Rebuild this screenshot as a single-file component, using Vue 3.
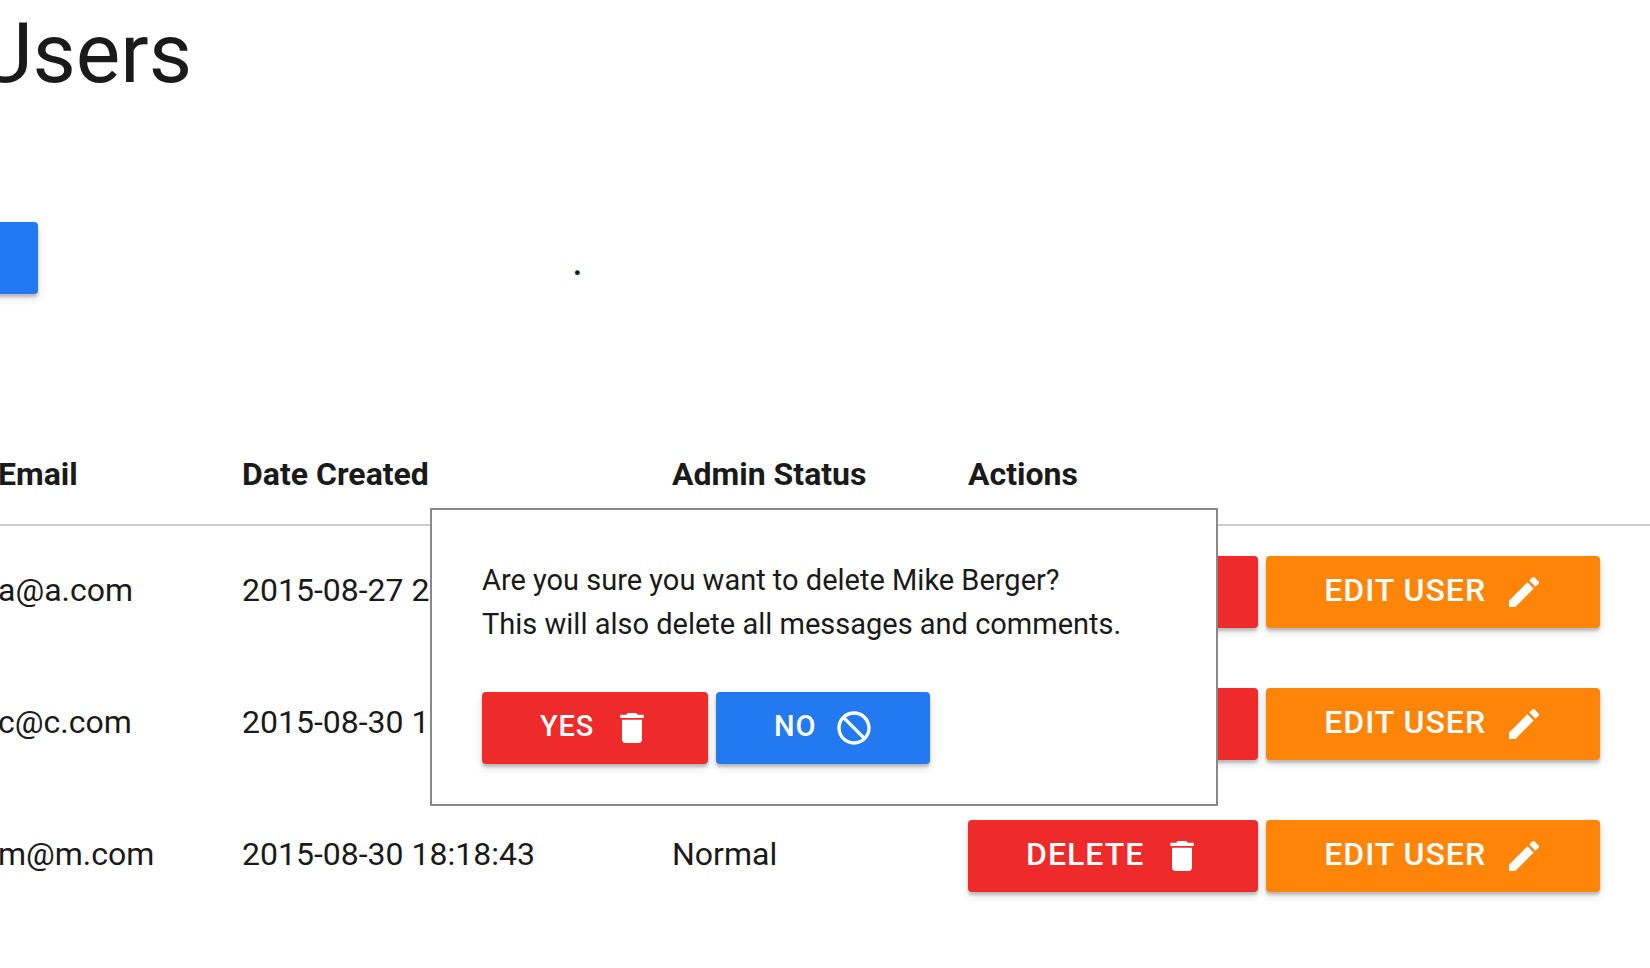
<script setup>
const users = [
  { email: 'a@a.com', created: '2015-08-27 22:14:09', status: 'Admin' },
  { email: 'c@c.com', created: '2015-08-30 18:16:27', status: 'Normal' },
  { email: 'm@m.com', created: '2015-08-30 18:18:43', status: 'Normal' },
]

const trash = 'M6 19c0 1.1.9 2 2 2h8c1.1 0 2-.9 2-2V7H6v12zM19 4h-3.5l-1-1h-5l-1 1H5v2h14V4z'
const pencil = 'M3 17.25V21h3.75L17.81 9.94l-3.75-3.75L3 17.25zM20.71 7.04c.39-.39.39-1.02 0-1.41l-2.34-2.34c-.39-.39-1.02-.39-1.41 0l-1.83 1.83 3.75 3.75 1.83-1.83z'
const block = 'M12 2C6.48 2 2 6.48 2 12s4.48 10 10 10 10-4.48 10-10S17.52 2 12 2zm0 18c-4.42 0-8-3.58-8-8 0-1.85.63-3.55 1.69-4.9L16.9 18.31C15.55 19.37 13.85 20 12 20zm6.31-3.1L7.1 5.69C8.45 4.63 10.15 4 12 4c4.42 0 8 3.58 8 8 0 1.85-.63 3.55-1.69 4.9z'
</script>

<template>
  <div class="page">
    <h1 class="title">Users</h1>

    <div class="toolbar">
      <button class="btn btn--blue btn--stub"></button>
      <span class="dot">.</span>
    </div>

    <div class="table">
      <div class="row row--head">
        <div class="email">Email</div>
        <div>Date Created</div>
        <div>Admin Status</div>
        <div>Actions</div>
      </div>
      <div v-for="user in users" :key="user.email" class="row">
        <div class="cell email">{{ user.email }}</div>
        <div class="cell">{{ user.created }}</div>
        <div class="cell">{{ user.status }}</div>
        <div class="actions">
          <button class="btn btn--red">
            <span class="btn__label">DELETE</span>
            <svg class="icon" viewBox="0 0 24 24"><path :d="trash" /></svg>
          </button>
          <button class="btn btn--orange">
            <span class="btn__label">EDIT USER</span>
            <svg class="icon" viewBox="0 0 24 24"><path :d="pencil" /></svg>
          </button>
        </div>
      </div>
    </div>

    <div class="dialog">
      <p class="dialog__text">
        Are you sure you want to delete Mike Berger?<br />
        This will also delete all messages and comments.
      </p>
      <div class="dialog__actions">
        <button class="btn btn--red">
          <span class="btn__label">YES</span>
          <svg class="icon" viewBox="0 0 24 24"><path :d="trash" /></svg>
        </button>
        <button class="btn btn--blue">
          <span class="btn__label">NO</span>
          <svg class="icon" viewBox="0 0 24 24"><path :d="block" /></svg>
        </button>
      </div>
    </div>
  </div>
</template>

<style>
html,
body {
  margin: 0;
  background: #fff;
  overflow: hidden;
}
</style>

<style scoped>
.page {
  position: relative;
  width: 1650px;
  height: 968px;
  overflow: hidden;
  font-family: Roboto, "Liberation Sans", sans-serif;
  color: #1a1a1a;
  font-size: 32px;
}

.title {
  margin: 0 0 0 -22px;
  height: 222px;
  font-size: 84px;
  font-weight: 400;
  line-height: 108px;
}

.toolbar {
  display: flex;
  align-items: center;
  gap: 534px;
  margin-left: -80px;
  height: 72px;
}

.dot {
  padding-top: 5px;
  font-size: 42px;
  line-height: 1;
}

.table {
  margin-top: 130px;
}

.row {
  display: grid;
  grid-template-columns: 242px 430px 296px 1fr;
  align-items: center;
  height: 132px;
}

.row--head {
  height: 102px;
  padding-bottom: 0;
  box-sizing: border-box;
  font-weight: 700;
  border-bottom: 2px solid #ccc;
}

.email {
  margin-left: -2px;
}

.cell {
  padding-bottom: 5px;
}

.actions {
  display: flex;
  gap: 8px;
}

.btn {
  display: inline-flex;
  align-items: center;
  justify-content: center;
  height: 72px;
  padding: 0 56px 0 58px;
  border: 0;
  border-radius: 4px;
  color: #fff;
  font-family: inherit;
  font-size: 32px;
  font-weight: 500;
  letter-spacing: 1px;
  white-space: nowrap;
  box-shadow: 0 3px 3px rgba(0, 0, 0, 0.2), 0 4px 10px rgba(0, 0, 0, 0.12);
}

.btn__label {
  padding-bottom: 5px;
}

.btn--red {
  background: #ee2a2a;
}

.btn--orange {
  background: #ff8509;
}

.btn--blue {
  background: #2279f0;
}

.btn--stub {
  width: 118px;
  padding: 0;
}

.icon {
  width: 40px;
  height: 40px;
  margin-left: 18px;
  fill: #fff;
}

.dialog {
  position: absolute;
  left: 430px;
  top: 508px;
  box-sizing: border-box;
  width: 788px;
  height: 298px;
  padding: 48px 50px;
  background: #fff;
  border: 2px solid #888;
}

.dialog__text {
  margin: 0;
  font-size: 29px;
  line-height: 44px;
}

.dialog__actions {
  display: flex;
  gap: 8px;
  margin-top: 46px;
}

.dialog .btn {
  font-size: 29px;
  letter-spacing: 0.8px;
}

.dialog .btn__label {
  padding-bottom: 4px;
}
</style>
